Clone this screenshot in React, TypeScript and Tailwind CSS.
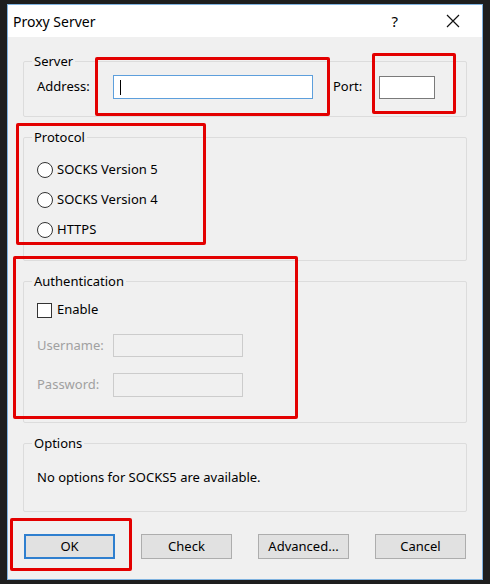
import { ReactNode } from "react"

function GroupBox({ title, className, children }: { title: string; className: string; children: ReactNode }) {
  return (
    <fieldset className={`border border-[#dcdcdc] rounded-[2px] ${className}`}>
      <legend className="ml-[8px] px-[2px] leading-[18px]">{title}</legend>
      {children}
    </fieldset>
  )
}

function Radio({ label }: { label: string }) {
  return (
    <div className="flex items-center h-[30px]">
      <span className="w-[16px] h-[16px] rounded-full border border-[#333333] bg-white" />
      <span className="ml-[4px]">{label}</span>
    </div>
  )
}

function Button({ label, primary }: { label: string; primary?: boolean }) {
  return (
    <button
      className={`w-[91px] h-[25px] bg-[#e1e1e1] flex items-center justify-center ${
        primary ? "border-2 border-[#2f7fcf]" : "border border-[#adadad]"
      }`}
    >
      {label}
    </button>
  )
}

// red annotation frames drawn over the screenshot
const marks = [
  "left-[95px] top-[57px] w-[235px] h-[59px]",
  "left-[372px] top-[53px] w-[84px] h-[61px]",
  "left-[16px] top-[123px] w-[190px] h-[122px]",
  "left-[13px] top-[256px] w-[285px] h-[163px]",
  "left-[10px] top-[518px] w-[122px] h-[53px]",
]

export default function App() {
  return (
    <div className="relative w-[490px] h-[584px] bg-[#1e1e1e] overflow-hidden pt-[4px] pl-[7px] font-['Noto_Sans',sans-serif] text-[13px] text-black">
      <div className="w-[476px] h-[576px] border border-[#7fb2df] bg-[#f0f0f0] flex flex-col">
        {/* Title bar */}
        <div className="h-[32px] bg-white flex items-center shrink-0">
          <span className="ml-[5px] text-[14px]">Proxy Server</span>
          <span className="ml-auto text-[15px] mr-[48px]">?</span>
          <svg width="14" height="14" viewBox="0 0 14 14" className="mr-[22px]">
            <path d="M1 1 L13 13 M13 1 L1 13" stroke="#111" strokeWidth="1.2" />
          </svg>
        </div>

        <div className="px-[15px] flex flex-col">
          <GroupBox title="Server" className="mt-[15px] h-[65px]">
            <div className="flex items-center mt-[5px] pl-[13px] h-[24px]">
              <span className="w-[76px]">Address:</span>
              <div className="w-[200px] h-[24px] border border-[#5d9fdc] bg-white flex items-center pl-[6px]">
                <span className="w-[1px] h-[15px] bg-black" />
              </div>
              <span className="ml-[20px] w-[46px]">Port:</span>
              <div className="w-[56px] h-[23px] border border-[#7a7a7a] bg-white" />
            </div>
          </GroupBox>

          <GroupBox title="Protocol" className="mt-[11px] h-[133px]">
            <div className="mt-[9px] pl-[13px] flex flex-col">
              <Radio label="SOCKS Version 5" />
              <Radio label="SOCKS Version 4" />
              <Radio label="HTTPS" />
            </div>
          </GroupBox>

          <GroupBox title="Authentication" className="mt-[11px] h-[151px]">
            <div className="mt-[8px] pl-[13px] flex flex-col">
              <div className="flex items-center h-[24px]">
                <span className="w-[15px] h-[15px] border border-[#333333] bg-white" />
                <span className="ml-[5px]">Enable</span>
              </div>
              <div className="flex items-center mt-[12px] text-[#a0a0a0]">
                <span className="w-[76px]">Username:</span>
                <div className="w-[130px] h-[23px] border border-[#cccccc] bg-[#f0f0f0]" />
              </div>
              <div className="flex items-center mt-[16px] text-[#a0a0a0]">
                <span className="w-[76px]">Password:</span>
                <div className="w-[130px] h-[24px] border border-[#cccccc] bg-[#f0f0f0]" />
              </div>
            </div>
          </GroupBox>

          <GroupBox title="Options" className="mt-[11px] h-[78px]">
            <div className="mt-[16px] pl-[13px] h-[20px] flex items-center">
              No options for SOCKS5 are available.
            </div>
          </GroupBox>

          <div className="mt-[22px] flex justify-between px-[1px]">
            <Button label="OK" primary />
            <Button label="Check" />
            <Button label="Advanced..." />
            <Button label="Cancel" />
          </div>
        </div>
      </div>

      {marks.map((m) => (
        <div key={m} className={`absolute border-[3px] border-[#e30000] rounded-[2px] ${m}`} />
      ))}
    </div>
  )
}
